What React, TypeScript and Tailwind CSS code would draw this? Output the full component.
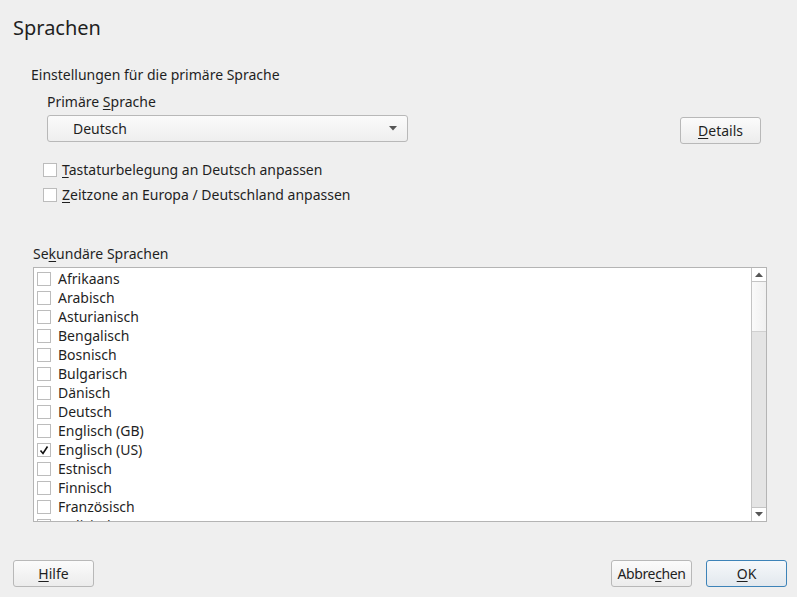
import { useState } from "react";

const languages = [
  "Afrikaans",
  "Arabisch",
  "Asturianisch",
  "Bengalisch",
  "Bosnisch",
  "Bulgarisch",
  "Dänisch",
  "Deutsch",
  "Englisch (GB)",
  "Englisch (US)",
  "Estnisch",
  "Finnisch",
  "Französisch",
  "Galicisch",
];

const Box = ({ checked }: { checked: boolean }) => (
  <span className="w-[14px] h-[14px] border border-[#bcbcbc] bg-white flex items-center justify-center shrink-0">
    {checked && (
      <svg width="10" height="10" viewBox="0 0 10 10">
        <path d="M1.5 5.5 L4 8.5 L8.5 1.5" fill="none" stroke="#111" strokeWidth="1.6" />
      </svg>
    )}
  </span>
);

const Button = ({ children, primary }: { children: React.ReactNode; primary?: boolean }) => (
  <button
    className={
      "h-[27px] w-[81px] rounded-[3px] text-[14px] text-[#1f1f1f] flex items-center justify-center " +
      (primary
        ? "border border-[#3d83b8] bg-gradient-to-b from-[#f6f8fa] to-[#e2e8ee]"
        : "border border-[#b8b8b8] bg-gradient-to-b from-[#fbfbfb] to-[#ececec]")
    }
  >
    {children}
  </button>
);

export default function App() {
  const [checked, setChecked] = useState<string[]>(["Englisch (US)"]);

  const toggle = (l: string) =>
    setChecked((c) => (c.includes(l) ? c.filter((x) => x !== l) : [...c, l]));

  return (
    <div
      className="w-[797px] h-[597px] bg-[#efefef] text-[#1f1f1f] flex flex-col overflow-hidden"
      style={{ fontFamily: '"Noto Sans", sans-serif' }}
    >
      <h1 className="text-[20px] leading-none pl-[13px] pt-[18px]">Sprachen</h1>

      <div className="pl-[31px] pt-[29px] text-[14px]">
        <p className="leading-[16px]">Einstellungen für die primäre Sprache</p>

        <div className="flex items-end pl-[16px] pr-[36px]">
          <div className="flex-1">
            <p className="leading-[16px] pt-[11px]">
              Primäre <span className="underline underline-offset-2">S</span>prache
            </p>
            <div className="mt-[5px] w-[361px] h-[27px] rounded-[3px] border border-[#b8b8b8] bg-gradient-to-b from-[#fbfbfb] to-[#eeeeee] flex items-center pl-[25px] pr-[10px]">
              <span className="flex-1">Deutsch</span>
              <svg width="8" height="5" viewBox="0 0 8 5">
                <path d="M0 0 H8 L4 4.5 Z" fill="#555" />
              </svg>
            </div>
          </div>
          <div className="mb-[-2px]">
            <Button>
              <span className="underline underline-offset-2">D</span>etails
            </Button>
          </div>
        </div>

        <div className="pl-[12px] pt-[21px] flex flex-col gap-[11px]">
          <label className="flex items-center gap-[5px] leading-[14px]">
            <Box checked={false} />
            <span>
              <span className="underline underline-offset-2">T</span>astaturbelegung an Deutsch anpassen
            </span>
          </label>
          <label className="flex items-center gap-[5px] leading-[14px]">
            <Box checked={false} />
            <span>
              <span className="underline underline-offset-2">Z</span>eitzone an Europa / Deutschland anpassen
            </span>
          </label>
        </div>
      </div>

      <div className="pl-[33px] pr-[30px] pt-[44px] text-[14px]">
        <p className="leading-[16px]">
          Se<span className="underline underline-offset-2">k</span>undäre Sprachen
        </p>
        <div className="mt-[5px] h-[255px] border border-[#b4b4b4] bg-white flex">
          <div className="flex-1 overflow-hidden pt-[1px]">
            {languages.map((l) => (
              <div
                key={l}
                className="h-[19px] flex items-center gap-[7px] pl-[3px] cursor-default"
                onClick={() => toggle(l)}
              >
                <Box checked={checked.includes(l)} />
                <span className="leading-[19px]">{l}</span>
              </div>
            ))}
          </div>
          <div className="w-[15px] border-l border-[#c4c4c4] flex flex-col bg-[#e4e4e4]">
            <div className="h-[14px] bg-white border-b border-[#c4c4c4] flex items-center justify-center">
              <svg width="8" height="5" viewBox="0 0 8 5">
                <path d="M0 5 H8 L4 0.5 Z" fill="#555" />
              </svg>
            </div>
            <div className="h-[50px] bg-gradient-to-r from-[#fafafa] to-[#f0f0f0] border-b border-[#d0d0d0]" />
            <div className="flex-1" />
            <div className="h-[14px] bg-white border-t border-[#c4c4c4] flex items-center justify-center">
              <svg width="8" height="5" viewBox="0 0 8 5">
                <path d="M0 0 H8 L4 4.5 Z" fill="#555" />
              </svg>
            </div>
          </div>
        </div>
      </div>

      <div className="mt-auto flex items-center px-[10px] pb-[10px]">
        <div className="pl-[3px]">
          <Button>
            <span className="underline underline-offset-2">H</span>ilfe
          </Button>
        </div>
        <div className="flex-1" />
        <div className="flex gap-[14px]">
          <Button>
            <span className="tracking-[-0.4px]">
              Abbre<span className="underline underline-offset-2">c</span>hen
            </span>
          </Button>
          <Button primary>
            <span className="underline underline-offset-2">O</span>K
          </Button>
        </div>
      </div>
    </div>
  );
}
